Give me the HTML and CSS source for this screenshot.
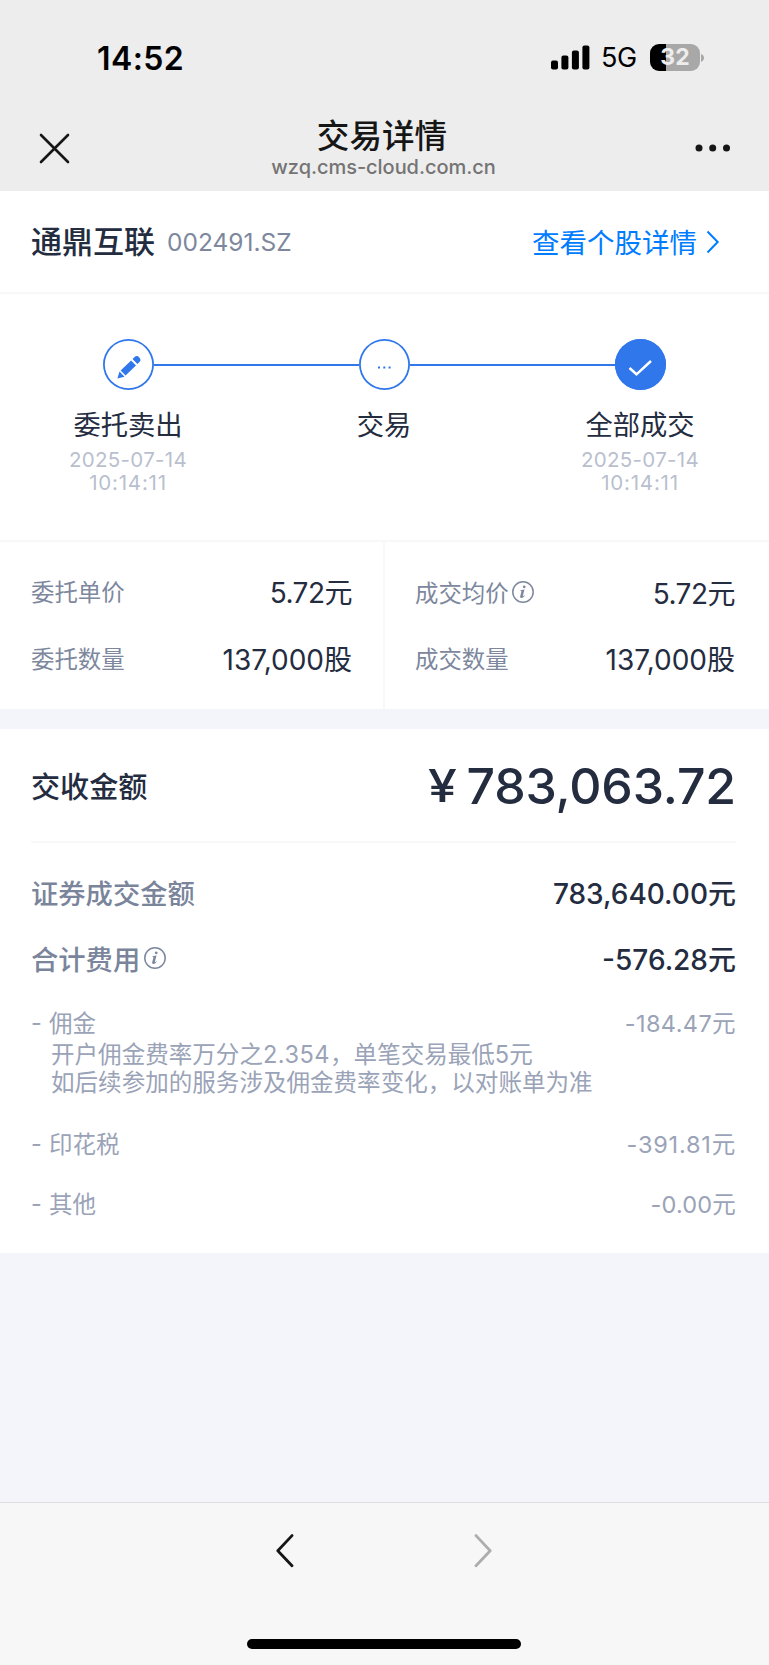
FILE: index.html
```html
<!DOCTYPE html>
<html lang="zh-CN">
<head>
<meta charset="utf-8">
<title>交易详情</title>
<link rel="stylesheet" href="styles.css">
</head>
<body>
<div class="screen">
  <header class="top">
    <div class="status">
      <span class="clock">14:52</span>
      <div class="status-right">
        <svg class="signal" width="39" height="25" viewBox="0 0 39 25"><rect x="0" y="15.5" width="7" height="9" rx="2"/><rect x="10.4" y="10.5" width="7" height="14" rx="2"/><rect x="20.9" y="5.5" width="7" height="19" rx="2"/><rect x="31.4" y="0.5" width="7" height="24" rx="2"/></svg>
        <span class="network">5G</span>
        <div class="battery"><span>32</span></div>
        <svg class="nub" width="4" height="8" viewBox="0 0 4 8"><path d="M0 0c2 .8 3 2.2 3 4s-1 3.200-3 4z" fill="#a8a8a8"/></svg>
      </div>
    </div>
    <div class="nav">
      <svg class="close" width="31" height="31" viewBox="0 0 31 31"><path d="M2 2l27 27M29 2L2 29"/></svg>
      <div class="heading">
        <div class="title">交易详情</div>
        <div class="url">wzq.cms-cloud.com.cn</div>
      </div>
      <svg class="more" width="36" height="8" viewBox="0 0 36 8"><circle cx="4" cy="4" r="3.500"/><circle cx="17.700" cy="4" r="3.500"/><circle cx="31.500" cy="4" r="3.500"/></svg>
    </div>
  </header>

  <section class="stock">
    <span class="name">通鼎互联</span>
    <span class="code">002491.SZ</span>
    <a class="link">查看个股详情</a>
    <svg class="chev" width="14" height="24" viewBox="0 0 14 24"><path d="M1.500 1.500L11.700 12 1.500 22.500"/></svg>
  </section>

  <section class="steps">
    <div class="step">
      <div class="track"><i></i><div class="dot"><svg width="51" height="51" viewBox="0 0 51 51"><g transform="translate(25.500 28.800) rotate(-44)" fill="#3077ec"><path d="M-15.500 0l6.500-3.600v7.200z"/><rect x="-7.500" y="-3.500" width="14.500" height="7"/><path d="M9-3.500h2.500a3.500 3.500 0 0 1 0 7H9z"/></g></svg></div><i class="on"></i></div>
      <div class="label">委托卖出</div>
      <div class="date">2025-07-14</div><div class="date time">10:14:11</div>
    </div>
    <div class="step">
      <div class="track"><i class="on"></i><div class="dot"><svg width="51" height="51" viewBox="0 0 51 51" fill="#3077ec"><rect x="19" y="27.500" width="2" height="2"/><rect x="24.300" y="27.500" width="2" height="2"/><rect x="29.600" y="27.500" width="2" height="2"/></svg></div><i class="on"></i></div>
      <div class="label">交易</div>
    </div>
    <div class="step">
      <div class="track"><i class="on"></i><div class="dot full"><svg width="51" height="51" viewBox="0 0 51 51"><path d="M14.500 29l7 6.300L36 22" fill="none" stroke="#fff" stroke-width="2.500"/></svg></div><i></i></div>
      <div class="label">全部成交</div>
      <div class="date">2025-07-14</div><div class="date time">10:14:11</div>
    </div>
  </section>

  <section class="quote">
    <div class="col">
      <div class="pair"><span class="key">委托单价</span><span class="val price">5.72元</span></div>
      <div class="pair"><span class="key">委托数量</span><span class="val">137,000股</span></div>
    </div>
    <div class="col right">
      <div class="pair low"><span class="key">成交均价</span><svg class="info" width="22" height="22" viewBox="0 0 22 22"><circle cx="11" cy="11" r="10.200"/><path class="i" d="M12.300 4.400a1.400 1.400 0 1 1-.1 2.800 1.400 1.400 0 0 1 .1-2.800zM8.300 9.200l4.200-.7-1.700 6.600c-.1.500.5.200 1.500-.8l.4.400c-1.200 1.600-2.400 2.300-3.500 2.200-1-.1-1.200-.8-1-1.700l1.200-4.800c.1-.5-.2-.6-1.100-.7z"/></svg><span class="val price">5.72元</span></div>
      <div class="pair"><span class="key">成交数量</span><span class="val">137,000股</span></div>
    </div>
  </section>

  <section class="bill">
    <div class="total"><span class="total-key">交收金额</span><span class="yen">¥</span><span class="amount">783,063.72</span></div>
    <div class="row main"><span class="mk">证券成交金额</span><span class="mv">783,640.00元</span></div>
    <div class="row main"><span class="mk">合计费用</span><svg class="info wide" width="22" height="22" viewBox="0 0 22 22"><circle cx="11" cy="11" r="10.200"/><path class="i" d="M12.300 4.400a1.400 1.400 0 1 1-.1 2.800 1.400 1.400 0 0 1 .1-2.800zM8.300 9.200l4.200-.7-1.700 6.600c-.1.500.5.200 1.500-.8l.4.400c-1.200 1.600-2.400 2.300-3.500 2.200-1-.1-1.200-.8-1-1.700l1.200-4.800c.1-.5-.2-.6-1.100-.7z"/></svg><span class="mv neg">-576.28元</span></div>
    <div class="row sub first"><span class="dash">-</span><span>佣金</span><span class="sv commission">-184.47元</span></div>
    <div class="note">开户佣金费率万分之<span class="rate">2.354</span>，单笔交易最低5元<br>如后续参加的服务涉及佣金费率变化，以对账单为准</div>
    <div class="row sub"><span class="dash">-</span><span>印花税</span><span class="sv tax">-391.81元</span></div>
    <div class="row sub"><span class="dash">-</span><span>其他</span><span class="sv other">-0.00元</span></div>
  </section>

  <footer class="bottom">
    <div class="arrows">
      <svg width="18" height="34" viewBox="0 0 18 34"><path d="M16 1.600L1.800 16.700l14.200 15.100" stroke="#161616"/></svg>
      <svg width="18" height="34" viewBox="0 0 18 34"><path d="M2 1.600L16.200 16.700 2 31.800" stroke="#adadad"/></svg>
    </div>
    <div class="home"></div>
  </footer>
</div>
</body>
</html>
```

FILE: styles.css
```css
* { box-sizing: border-box; }
body {
  margin: 0;
  background: #f4f5fa;
  font-family: Inter, "Noto Sans CJK SC", sans-serif;
  color: #242c3f;
}
svg { display: block; flex: none; }
span { white-space: nowrap; }
.screen { width: 769px; height: 1665px; display: flex; flex-direction: column; overflow: hidden; }

.top { height: 191px; background: #ededed; flex: none; }
.status { height: 115px; display: flex; align-items: center; justify-content: space-between; padding: 0 64px 0 97px; color: #000; }
.clock { font-size: 32px; font-weight: 600; letter-spacing: 0.4px; padding-top: 1px; }
.status-right { display: flex; align-items: center; }
.network { font-size: 27px; letter-spacing: -0.3px; margin-left: 11px; width: 49px; line-height: 30px; padding-top: 1px; }
.battery {
  width: 50px; height: 27px; border-radius: 9px;
  background: linear-gradient(90deg, #000 0 16px, #a8a8a8 16px);
  color: #ededed; font-size: 23px; font-weight: 700; line-height: 27px; text-align: center;
}
.nub { margin-left: 1px; }
.nav { height: 76px; display: flex; align-items: flex-start; justify-content: space-between; padding: 0 38px 0 39px; }
.close { margin-top: 18px; fill: none; stroke: #161616; stroke-width: 2.6; stroke-linecap: round; }
.more { margin-top: 29px; fill: #161616; }
.heading { text-align: center; padding-left: 2px; }
.title { font-size: 32.6px; line-height: 40px; padding: 1px 3px 0 0; color: #161616; font-weight: 500; }
.url { font-size: 20px; line-height: 20px; margin-top: 1px; color: #747474; letter-spacing: -0.05px; font-weight: 500; }

.stock { height: 103px; background: #fff; border-bottom: 2px solid #f8f8f9; display: flex; align-items: center; padding: 0 49px 0 31px; flex: none; }
.name { font-size: 31px; font-weight: 500; padding-bottom: 4px; }
.code { font-size: 24.5px; color: #7d879d; margin-left: 12px; }
.link { font-size: 27.5px; color: #007cff; margin-left: auto; padding-bottom: 1px; }
.chev { margin: 1px 0 0 9px; fill: none; stroke: #007cff; stroke-width: 2; }

.steps { height: 248px; background: #fff; border-bottom: 2px solid #f8f8f9; display: grid; grid-template-columns: repeat(3, 1fr); padding: 45px 1px 0 0; flex: none; text-align: center; }
.track { display: flex; align-items: center; height: 51px; }
.track i { flex: 1; height: 2px; }
.track i.on { background: #3077ec; }
.dot { width: 51px; height: 51px; border-radius: 50%; box-shadow: inset 0 0 0 1.8px #3077ec; }
.dot.full { background: #3077ec; }
.label { font-size: 27.3px; line-height: 40px; margin-top: 16px; }
.date { font-size: 20.5px; line-height: 23px; letter-spacing: 0.3px; color: #b9bfce; margin-top: 2px; }
.date.time { margin-top: 0; letter-spacing: 0.8px; }

.quote { height: 167px; background: #fff; display: grid; grid-template-columns: 383px 386px; flex: none; }
.col { padding: 29px 31px 0; }
.col.right { border-left: 2px solid #f8f8f9; padding-left: 30px; padding-right: 34px; }
.pair { height: 40px; display: flex; align-items: center; margin-bottom: 27px; }
.pair.low { margin-top: 1px; margin-bottom: 26px; }
.key { font-size: 23.4px; color: #7d879d; }
.val { font-size: 28px; margin-left: auto; }
.val.price { letter-spacing: -0.5px; }
.info { margin-left: 3px; fill: none; stroke: #7d879d; stroke-width: 1.5; }
.info .i { fill: #7d879d; stroke: none; }
.info.wide { margin-left: 4px; }

.bill { height: 524px; margin-top: 20px; background: #fff; padding: 0 33px 0 31px; flex: none; }
.total { height: 114px; display: flex; align-items: center; border-bottom: 2px solid #f8f8f9; }
.total-key { font-size: 29.1px; font-weight: 500; padding-bottom: 1px; }
.yen { font-size: 45px; font-weight: 500; margin-left: auto; transform: scaleX(1.15); }
.amount { font-size: 50px; font-weight: 500; margin-left: 11px; letter-spacing: -0.15px; padding-top: 1px; }
.row { display: flex; align-items: center; height: 40px; }
.row.main { margin-top: 29px; height: 40px; font-weight: 500; }
.row.main + .row.main { margin-top: 26px; }
.mk { font-size: 27.3px; color: #7a849b; padding-bottom: 1px; }
.mv { font-size: 28px; margin-left: auto; }
.row.sub { font-size: 23.5px; color: #9aa3b7; margin-top: 20px; }
.row.sub.first { margin-top: 24px; }
.dash { width: 18px; }
.sv { margin-left: auto; }
.commission { letter-spacing: 0.4px; }
.tax { letter-spacing: 0.8px; }
.other { letter-spacing: 0.2px; }
.rate { letter-spacing: 0.5px; }
.note { font-size: 23.55px; line-height: 27.6px; color: #9aa3b7; padding-left: 20px; margin-top: -1px; white-space: nowrap; margin-bottom: 27px; }

.bottom { margin-top: auto; height: 163px; border-top: 1px solid #dfdfe3; background: #f7f7f7; flex: none; }
.arrows { display: flex; justify-content: space-between; padding: 31px 277px 0 276px; }
.arrows path { fill: none; stroke-width: 2.8; stroke-linecap: round; stroke-linejoin: round; }
.home { width: 274px; height: 10px; border-radius: 5px; background: #000; margin: 71px 0 0 247px; }
```
